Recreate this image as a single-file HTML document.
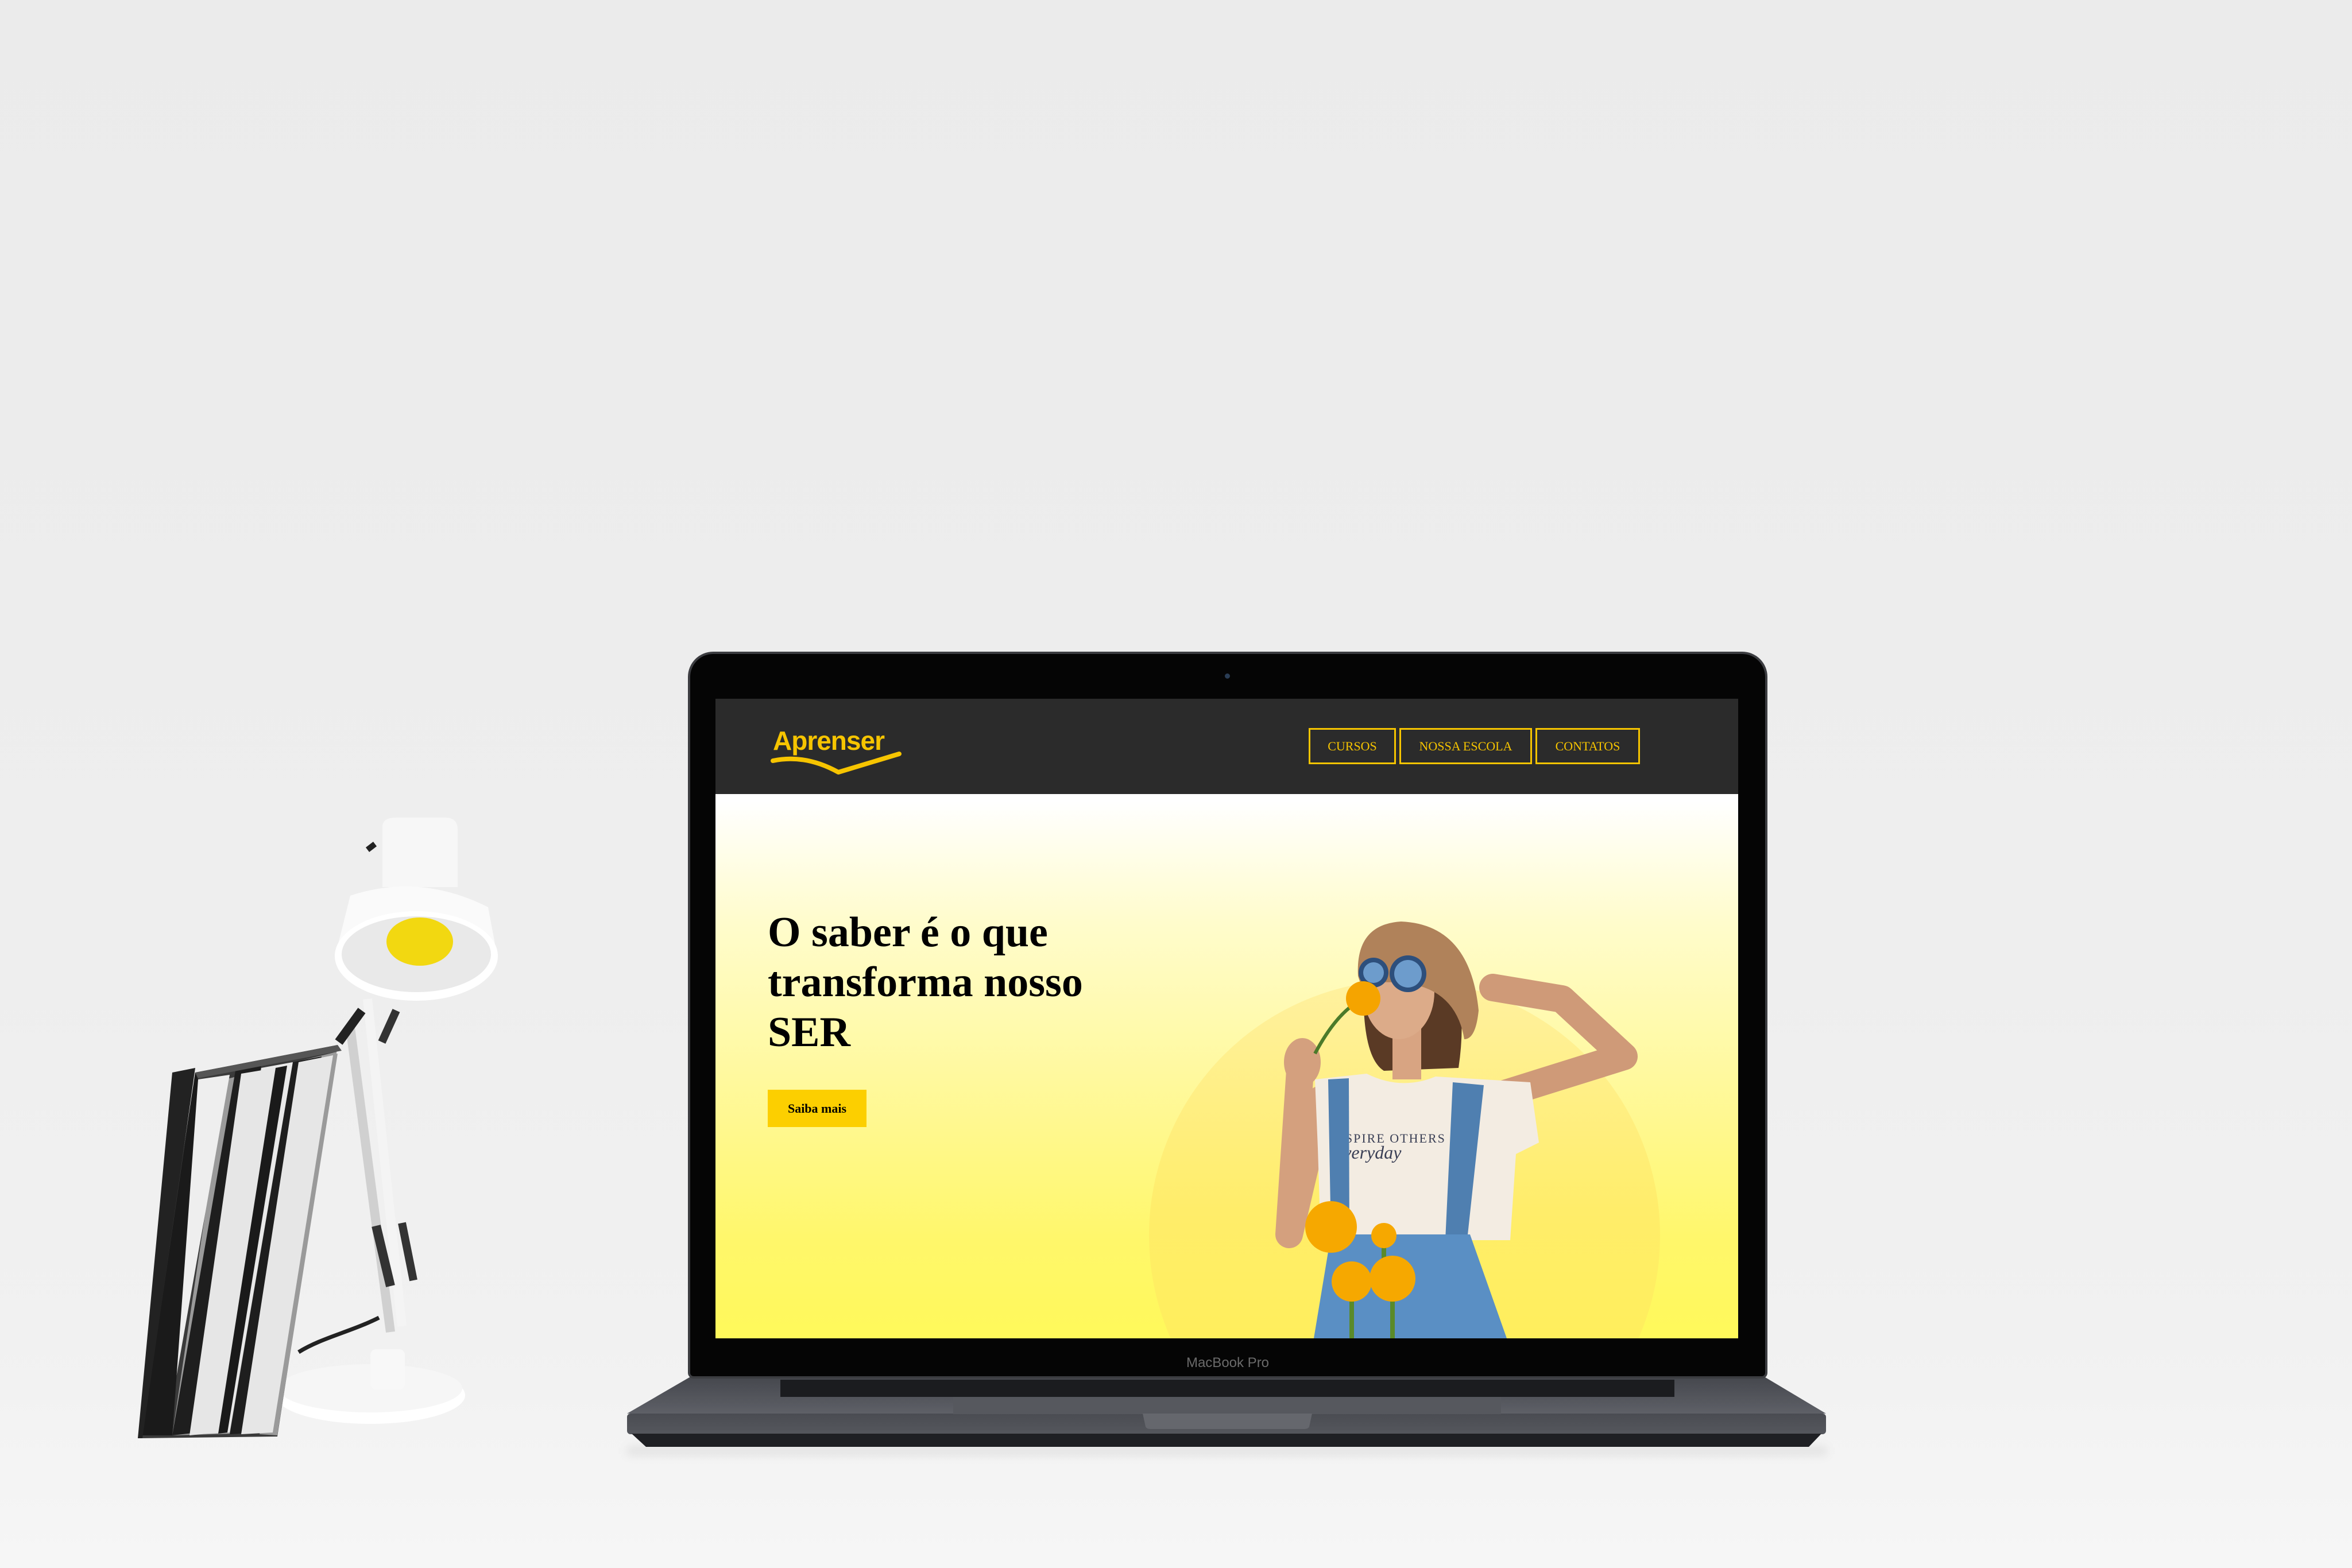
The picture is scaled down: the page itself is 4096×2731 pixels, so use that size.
<!DOCTYPE html>
<html><head><meta charset="utf-8"><style>
html,body{margin:0;padding:0;}
body{width:4096px;height:2731px;position:relative;overflow:hidden;background:linear-gradient(180deg,#ebebeb 0%,#eeeeee 60%,#f1f1f1 85%,#f4f4f4 100%);font-family:"Liberation Serif",serif;}
.abs{position:absolute;}
</style></head><body>
<div class="abs" style="left:0;top:2400px;width:4096px;height:331px;background:linear-gradient(180deg,#f2f2f2,#f6f6f6);"></div>

<!-- books and lamp -->
<svg class="abs" style="left:0;top:0" width="1100" height="2731" viewBox="0 0 1100 2731">
  <!-- lamp base -->
  <ellipse cx="645" cy="2430" rx="165" ry="50" fill="#ffffff"/>
  <ellipse cx="645" cy="2418" rx="160" ry="42" fill="#f6f6f6"/>
  <rect x="645" y="2350" width="60" height="70" rx="10" fill="#f8f8f8"/>
  <!-- cord -->
  <path d="M520 2355 C560 2330 610 2320 660 2295" stroke="#222" stroke-width="7" fill="none"/>
  <!-- arms -->
  <path d="M610 1790 L680 2320" stroke="#d0d0d0" stroke-width="16"/>
  <path d="M640 1740 L700 2310" stroke="#f4f4f4" stroke-width="16"/>
  <path d="M655 2135 L680 2240" stroke="#333" stroke-width="16"/>
  <path d="M700 2130 L720 2230" stroke="#333" stroke-width="14"/>
  <path d="M590 1815 L630 1760" stroke="#222" stroke-width="16"/>
  <path d="M690 1760 L665 1815" stroke="#333" stroke-width="14"/>
  <!-- shade -->
  <path d="M666 1440 Q666 1424 690 1424 L775 1424 Q797 1424 797 1445 L797 1545 L666 1545 Z" fill="#f7f7f7"/>
  <path d="M653 1470 L640 1480" stroke="#222" stroke-width="10"/>
  <path d="M610 1560 Q731 1520 850 1580 L865 1660 Q731 1700 585 1660 Z" fill="#fafafa"/>
  <ellipse cx="725" cy="1665" rx="142" ry="78" fill="#ffffff"/>
  <ellipse cx="725" cy="1662" rx="130" ry="66" fill="#e9e9e9"/>
  <ellipse cx="731" cy="1640" rx="58" ry="42" fill="#f2d811"/>
  <!-- books -->
  <polygon points="340,1868 588,1820 483,2502 243,2505" fill="#3a3a3a"/>
  <polygon points="392,1880 586,1832 480,2495 300,2500" fill="#9a9a9a"/>
  <polygon points="345,1880 400,1872 290,2495 248,2500" fill="#eeeeee"/>
  <polygon points="410,1865 455,1855 345,2495 300,2500" fill="#1e1e1e"/>
  <polygon points="455,1860 510,1850 400,2495 345,2498" fill="#e9e9e9"/>
  <polygon points="510,1850 560,1840 450,2495 400,2498" fill="#1e1e1e"/>
  <polygon points="560,1842 588,1835 483,2500 452,2498" fill="#9a9a9a"/>
  <polygon points="248,2500 300,2500 345,1880 340,1868" fill="#1a1a1a"/>
  <polygon points="300,1868 340,1860 248,2505 240,2505" fill="#222"/>
  <polygon points="340,1868 588,1820 595,1830 345,1878" fill="#555"/>
  <polygon points="420,1870 480,1860 380,2495 330,2500" fill="#e6e6e6"/>
  <polygon points="480,1860 500,1856 396,2495 380,2497" fill="#1a1a1a"/>
  <polygon points="520,1850 580,1838 475,2495 420,2498" fill="#e6e6e6"/>
</svg>

<!-- laptop base -->
<div class="abs" style="left:1092px;top:2520px;width:2089px;height:14px;background:rgba(0,0,0,0.08);filter:blur(8px);"></div>
<svg class="abs" style="left:1080px;top:2380px" width="2120" height="160" viewBox="1080 2380 2120 160">
  <defs>
    <linearGradient id="deck" x1="0" y1="0" x2="0" y2="1"><stop offset="0" stop-color="#45474d"/><stop offset="1" stop-color="#5e6067"/></linearGradient>
    <linearGradient id="front" x1="0" y1="0" x2="0" y2="1"><stop offset="0" stop-color="#4a4c52"/><stop offset="1" stop-color="#55575d"/></linearGradient>
  </defs>
  <path d="M1204 2397 L3071 2397 L3180 2462 L1092 2462 Z" fill="url(#deck)"/>
  <rect x="1092" y="2462" width="2088" height="36" rx="6" fill="url(#front)"/>
  <path d="M1100 2497 L3172 2497 L3150 2520 L1125 2520 Z" fill="#1f2024"/>
  <rect x="1359" y="2403" width="1557" height="30" fill="#1b1c1f"/>
  <rect x="1660" y="2433" width="954" height="30" fill="#56585e"/>
  <path d="M1990 2462 L2285 2462 L2280 2485 Q2278 2489 2270 2489 L2005 2489 Q1997 2489 1995 2485 Z" fill="#65676d"/>
</svg>

<!-- lid -->
<div class="abs" style="left:1202px;top:1139px;width:1872px;height:1258px;background:#050505;border-radius:40px 40px 6px 6px;box-shadow:0 0 0 4px #3c3d41;"></div>
<div class="abs" style="left:2133px;top:1173px;width:9px;height:9px;border-radius:50%;background:#2a3d55;"></div>
<div class="abs" style="left:1838px;top:2360px;width:600px;text-align:center;color:#6a6a6a;font:24px 'Liberation Sans',sans-serif;">MacBook Pro</div>

<!-- screen -->
<div class="abs" style="left:1246px;top:1217px;width:1781px;height:1114px;overflow:hidden;background:linear-gradient(180deg,#ffffff 0%,#ffffff 16%,#fffccc 35%,#fff9a0 58%,#fff76a 85%,#fff95a 100%);">
  <div class="abs" style="left:0;top:0;width:1781px;height:166px;background:#2b2b2b;"></div>
  <!-- logo -->
  <div class="abs" style="left:100px;top:46px;color:#f6c400;font:bold 46px 'Liberation Sans',sans-serif;letter-spacing:-1px;">Aprenser</div>
  <svg class="abs" style="left:96px;top:88px" width="230" height="60" viewBox="0 0 230 60">
    <path d="M4 20 Q60 8 118 40 L224 8" stroke="#f6c400" stroke-width="8" fill="none" stroke-linecap="round" stroke-linejoin="round"/>
  </svg>
  <!-- nav -->
  <div class="abs" style="left:1033px;top:51px;width:146px;height:57px;border:3px solid #f6c400;color:#f6c400;font:22px 'Liberation Serif',serif;display:flex;align-items:center;justify-content:center;">CURSOS</div>
  <div class="abs" style="left:1191px;top:51px;width:225px;height:57px;border:3px solid #f6c400;color:#f6c400;font:22px 'Liberation Serif',serif;display:flex;align-items:center;justify-content:center;">NOSSA ESCOLA</div>
  <div class="abs" style="left:1428px;top:51px;width:176px;height:57px;border:3px solid #f6c400;color:#f6c400;font:22px 'Liberation Serif',serif;display:flex;align-items:center;justify-content:center;">CONTATOS</div>
  <!-- headline -->
  <div class="abs" style="left:91px;top:364px;width:700px;color:#000;font:bold 74px/87px 'Liberation Serif',serif;">O saber é o que transforma nosso SER</div>
  <div class="abs" style="left:91px;top:681px;width:172px;height:65px;background:#fccf00;color:#000;font:bold 22px 'Liberation Serif',serif;display:flex;align-items:center;justify-content:center;">Saiba mais</div>
  <!-- circle -->
  <div class="abs" style="left:755px;top:490px;width:890px;height:890px;border-radius:50%;background:linear-gradient(180deg,#fff1a0 0%,#ffed6a 45%,#fff04c 100%);"></div>
  <!-- woman -->
  <svg class="abs" style="left:0;top:0" width="1781" height="1114" viewBox="1246 1217 1781 1114">
    <!-- right arm -->
    <path d="M2620 1905 L2828 1840 L2720 1740 L2600 1720" stroke="#cf9a78" stroke-width="48" fill="none" stroke-linejoin="round" stroke-linecap="round"/>
    <!-- left arm -->
    <path d="M2300 1915 L2245 2150 L2265 1850" stroke="#d4a07e" stroke-width="48" fill="none" stroke-linejoin="round" stroke-linecap="round"/>
    <ellipse cx="2268" cy="1850" rx="32" ry="42" fill="#d4a07e"/>
    <!-- hair -->
    <path d="M2375 1700 Q2370 1840 2410 1865 L2540 1860 Q2555 1760 2530 1680 Z" fill="#5a3a25"/>
    <!-- neck/face -->
    <rect x="2425" y="1790" width="50" height="90" fill="#d8a482"/>
    <ellipse cx="2436" cy="1728" rx="62" ry="82" fill="#dcab89"/>
    <!-- hat -->
    <path d="M2365 1700 Q2360 1610 2440 1605 Q2560 1610 2575 1760 Q2570 1810 2550 1810 Q2530 1690 2370 1715 Z" fill="#b0825a"/>
    <!-- glasses -->
    <circle cx="2392" cy="1694" r="26" fill="#2d4f7c"/>
    <circle cx="2452" cy="1696" r="32" fill="#2d4f7c"/>
    <circle cx="2452" cy="1696" r="24" fill="#6d9ccc"/>
    <circle cx="2392" cy="1694" r="18" fill="#6d9ccc"/>
    <!-- shirt -->
    <path d="M2290 1880 L2380 1870 Q2440 1900 2500 1875 L2665 1885 L2680 1990 L2640 2010 L2630 2160 L2300 2160 L2295 2000 Z" fill="#f3ece2"/>
    <text x="2325" y="1990" font-family="Liberation Serif,serif" font-size="22" fill="#3a3f55" letter-spacing="2">NSPIRE OTHERS</text>
    <text x="2325" y="2018" font-family="Liberation Serif,serif" font-style="italic" font-size="32" fill="#3a3f55">everyday</text>
    <!-- straps -->
    <path d="M2313 1880 L2349 1878 L2350 2160 L2318 2160 Z" fill="#4f7fb0"/>
    <path d="M2530 1885 L2584 1890 L2555 2160 L2517 2160 Z" fill="#4f7fb0"/>
    <!-- skirt -->
    <path d="M2318 2150 L2560 2150 L2624 2331 L2288 2331 Z" fill="#5a8fc4"/>
    <!-- flowers -->
    <path d="M2290 1835 Q2330 1760 2374 1740" stroke="#4b7a2a" stroke-width="6" fill="none"/>
    <circle cx="2374" cy="1739" r="30" fill="#f5a400"/>
    <path d="M2354 2260 L2354 2331 M2425 2250 L2425 2331 M2410 2160 L2410 2240" stroke="#5a8a2a" stroke-width="8"/>
    <circle cx="2318" cy="2137" r="45" fill="#f6a800"/>
    <circle cx="2410" cy="2152" r="22" fill="#f6a800"/>
    <circle cx="2354" cy="2232" r="35" fill="#f6a800"/>
    <circle cx="2425" cy="2227" r="40" fill="#f6a800"/>
  </svg>
</div>
</body></html>
